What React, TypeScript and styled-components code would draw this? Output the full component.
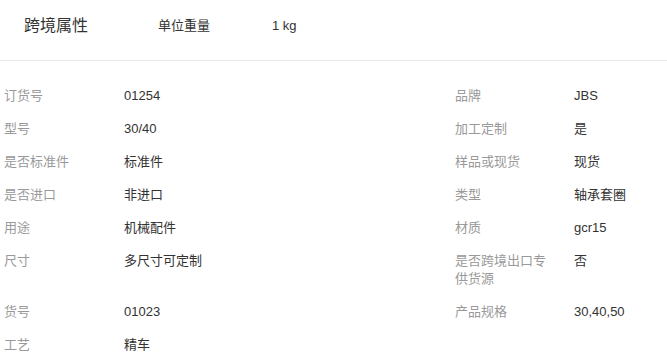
import styled, { createGlobalStyle } from 'styled-components';

const GlobalStyle = createGlobalStyle`
  body {
    margin: 0;
    background: #fff;
    font-family: "Liberation Sans", Arial, "Noto Sans CJK SC", sans-serif;
    -webkit-font-smoothing: antialiased;
  }
`;

const Panel = styled.div`
  width: 667px;
  background: #fff;
`;

const Header = styled.div`
  box-sizing: border-box;
  height: 61px;
  padding: 16px 24px 0;
  display: flex;
  align-items: flex-start;
  line-height: 20px;
  border-bottom: 1px solid #e8e8e8;
`;

const Title = styled.div`
  width: 134px;
  font-size: 16px;
  color: #333;
`;

const HeaderLabel = styled.div`
  width: 114px;
  font-size: 13px;
  color: #333;
`;

const HeaderValue = styled.div`
  font-size: 13px;
  color: #333;
`;

const Grid = styled.div`
  display: grid;
  grid-template-columns: 451px 1fr;
  padding: 19px 0 0 4px;
`;

const Item = styled.div`
  display: flex;
  align-items: flex-start;
  padding: 7px 0 8px;
  font-size: 13px;
  line-height: 18px;
`;

const Label = styled.div<{ $width: number }>`
  box-sizing: border-box;
  flex: 0 0 ${({ $width }) => $width}px;
  padding-right: 20px;
  color: #999;
`;

const Value = styled.div`
  flex: 1;
  color: #333;
`;

type Attr = { label: string; value: string };

// paired left / right, laid out row by row
const attrs: (Attr | null)[][] = [
  [{ label: '订货号', value: '01254' }, { label: '品牌', value: 'JBS' }],
  [{ label: '型号', value: '30/40' }, { label: '加工定制', value: '是' }],
  [{ label: '是否标准件', value: '标准件' }, { label: '样品或现货', value: '现货' }],
  [{ label: '是否进口', value: '非进口' }, { label: '类型', value: '轴承套圈' }],
  [{ label: '用途', value: '机械配件' }, { label: '材质', value: 'gcr15' }],
  [{ label: '尺寸', value: '多尺寸可定制' }, { label: '是否跨境出口专供货源', value: '否' }],
  [{ label: '货号', value: '01023' }, { label: '产品规格', value: '30,40,50' }],
  [{ label: '工艺', value: '精车' }, null],
];

export default function App() {
  return (
    <Panel>
      <GlobalStyle />
      <Header>
        <Title>跨境属性</Title>
        <HeaderLabel>单位重量</HeaderLabel>
        <HeaderValue>1 kg</HeaderValue>
      </Header>
      <Grid>
        {attrs.flatMap((row, r) =>
          row.map((a, c) =>
            a ? (
              <Item key={`${r}-${c}`}>
                <Label $width={c === 0 ? 120 : 119}>{a.label}</Label>
                <Value>{a.value}</Value>
              </Item>
            ) : (
              <div key={`${r}-${c}`} />
            ),
          ),
        )}
      </Grid>
    </Panel>
  );
}
